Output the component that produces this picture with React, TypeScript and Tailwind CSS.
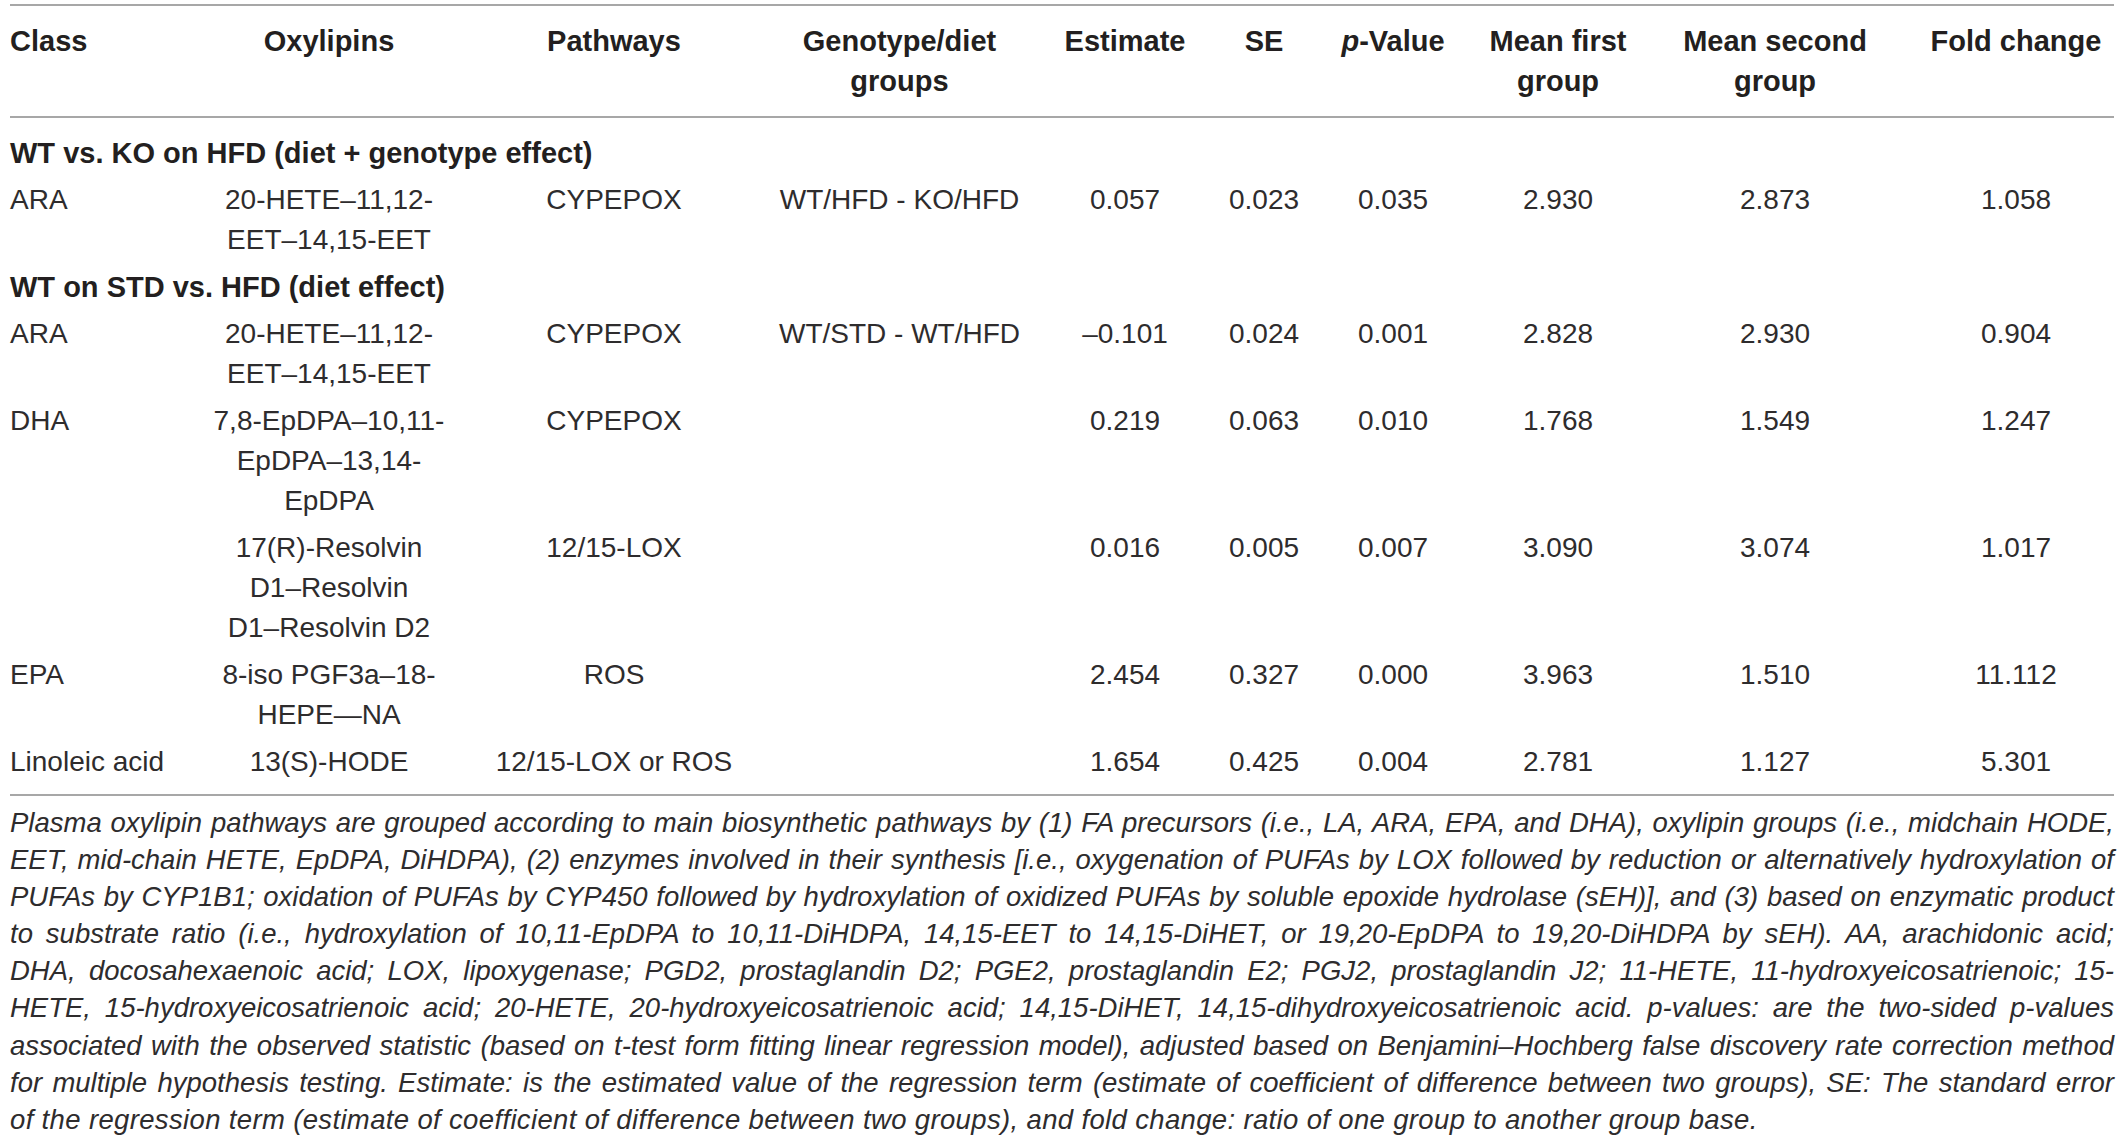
import React from "react";

type Row = {
  cls?: string;
  oxy: string[];
  path?: string;
  geno?: string;
  est: string;
  se: string;
  p: string;
  m1: string;
  m2: string;
  fc: string;
};

type Section = { title: string; rows: Row[] };

const sections: Section[] = [
  {
    title: "WT vs. KO on HFD (diet + genotype effect)",
    rows: [
      {
        cls: "ARA",
        oxy: ["20-HETE–11,12-", "EET–14,15-EET"],
        path: "CYPEPOX",
        geno: "WT/HFD - KO/HFD",
        est: "0.057",
        se: "0.023",
        p: "0.035",
        m1: "2.930",
        m2: "2.873",
        fc: "1.058",
      },
    ],
  },
  {
    title: "WT on STD vs. HFD (diet effect)",
    rows: [
      {
        cls: "ARA",
        oxy: ["20-HETE–11,12-", "EET–14,15-EET"],
        path: "CYPEPOX",
        geno: "WT/STD - WT/HFD",
        est: "–0.101",
        se: "0.024",
        p: "0.001",
        m1: "2.828",
        m2: "2.930",
        fc: "0.904",
      },
      {
        cls: "DHA",
        oxy: ["7,8-EpDPA–10,11-", "EpDPA–13,14-", "EpDPA"],
        path: "CYPEPOX",
        est: "0.219",
        se: "0.063",
        p: "0.010",
        m1: "1.768",
        m2: "1.549",
        fc: "1.247",
      },
      {
        oxy: ["17(R)-Resolvin", "D1–Resolvin", "D1–Resolvin D2"],
        path: "12/15-LOX",
        est: "0.016",
        se: "0.005",
        p: "0.007",
        m1: "3.090",
        m2: "3.074",
        fc: "1.017",
      },
      {
        cls: "EPA",
        oxy: ["8-iso PGF3a–18-", "HEPE—NA"],
        path: "ROS",
        est: "2.454",
        se: "0.327",
        p: "0.000",
        m1: "3.963",
        m2: "1.510",
        fc: "11.112",
      },
      {
        cls: "Linoleic acid",
        oxy: ["13(S)-HODE"],
        path: "12/15-LOX or ROS",
        est: "1.654",
        se: "0.425",
        p: "0.004",
        m1: "2.781",
        m2: "1.127",
        fc: "5.301",
      },
    ],
  },
];

const caption = [
  "Plasma oxylipin pathways are grouped according to main biosynthetic pathways by (1) FA precursors (i.e., LA, ARA, EPA, and DHA), oxylipin groups (i.e., midchain HODE,",
  "EET, mid-chain HETE, EpDPA, DiHDPA), (2) enzymes involved in their synthesis [i.e., oxygenation of PUFAs by LOX followed by reduction or alternatively hydroxylation of",
  "PUFAs by CYP1B1; oxidation of PUFAs by CYP450 followed by hydroxylation of oxidized PUFAs by soluble epoxide hydrolase (sEH)], and (3) based on enzymatic product",
  "to substrate ratio (i.e., hydroxylation of 10,11-EpDPA to 10,11-DiHDPA, 14,15-EET to 14,15-DiHET, or 19,20-EpDPA to 19,20-DiHDPA by sEH). AA, arachidonic acid;",
  "DHA, docosahexaenoic acid; LOX, lipoxygenase; PGD2, prostaglandin D2; PGE2, prostaglandin E2; PGJ2, prostaglandin J2; 11-HETE, 11-hydroxyeicosatrienoic; 15-",
  "HETE, 15-hydroxyeicosatrienoic acid; 20-HETE, 20-hydroxyeicosatrienoic acid; 14,15-DiHET, 14,15-dihydroxyeicosatrienoic acid. p-values: are the two-sided p-values",
  "associated with the observed statistic (based on t-test form fitting linear regression model), adjusted based on Benjamini–Hochberg false discovery rate correction method",
  "for multiple hypothesis testing. Estimate: is the estimated value of the regression term (estimate of coefficient of difference between two groups), SE: The standard error",
  "of the regression term (estimate of coefficient of difference between two groups), and fold change: ratio of one group to another group base.",
];

function Lines({ lines }: { lines: string[] }) {
  return (
    <>
      {lines.map((l, i) => (
        <span key={i} className="block whitespace-nowrap">
          {l}
        </span>
      ))}
    </>
  );
}

export default function App() {
  const th = "align-top px-0 pt-[15px] pb-[15px] font-bold text-[29px] text-[#231f20] text-center border-b-2 border-[#a7a7a7]";
  const td = "align-top px-0 py-[3.5px] text-center whitespace-nowrap";

  return (
    <div className="min-h-screen bg-white pt-[4px] pl-[10px] font-['Liberation_Sans',Arial,sans-serif] text-[#2e2c2d]">
      <div className="w-[2104px] border-y-2 border-[#a7a7a7]">
        <table className="w-full table-fixed border-separate border-spacing-0 text-[28px] leading-[40px]">
          <colgroup>
            <col className="w-[190px]" />
            <col className="w-[258px]" />
            <col className="w-[312px]" />
            <col className="w-[259px]" />
            <col className="w-[192px]" />
            <col className="w-[86px]" />
            <col className="w-[172px]" />
            <col className="w-[158px]" />
            <col className="w-[276px]" />
            <col className="w-[201px]" />
          </colgroup>
          <thead>
            <tr>
              <th className={`${th} !text-left`}>Class</th>
              <th className={th}>Oxylipins</th>
              <th className={th}>Pathways</th>
              <th className={th}>
                Genotype/diet
                <br />
                groups
              </th>
              <th className={th}>Estimate</th>
              <th className={th}>SE</th>
              <th className={th}>
                <i>p</i>-Value
              </th>
              <th className={th}>
                Mean first
                <br />
                group
              </th>
              <th className={`${th} whitespace-nowrap`}>
                Mean second
                <br />
                group
              </th>
              <th className={`${th} pl-[5px] whitespace-nowrap`}>Fold change</th>
            </tr>
          </thead>
          <tbody>
            {sections.map((s, si) => (
              <React.Fragment key={s.title}>
                <tr>
                  <td
                    colSpan={10}
                    className={`px-0 pb-[3.5px] text-left text-[29px] font-bold text-[#231f20] whitespace-nowrap ${si === 0 ? "pt-[15px]" : "pt-[3.5px]"}`}
                  >
                    {s.title}
                  </td>
                </tr>
                {s.rows.map((r, ri) => {
                  const last = si === sections.length - 1 && ri === s.rows.length - 1;
                  const pad = last ? "pb-[12px]" : "";
                  return (
                    <tr key={ri}>
                      <td className={`${td} text-left ${pad}`}>{r.cls}</td>
                      <td className={`${td} ${pad}`}>
                        <Lines lines={r.oxy} />
                      </td>
                      <td className={`${td} ${pad}`}>{r.path}</td>
                      <td className={`${td} ${pad}`}>{r.geno}</td>
                      <td className={`${td} ${pad}`}>{r.est}</td>
                      <td className={`${td} ${pad}`}>{r.se}</td>
                      <td className={`${td} ${pad}`}>{r.p}</td>
                      <td className={`${td} ${pad}`}>{r.m1}</td>
                      <td className={`${td} ${pad}`}>{r.m2}</td>
                      <td className={`${td} pl-[5px] ${pad}`}>{r.fc}</td>
                    </tr>
                  );
                })}
              </React.Fragment>
            ))}
          </tbody>
        </table>
      </div>

      <div className="mt-[8px] w-[2104px] text-[27.5px] leading-[37.1px] italic">
        {caption.map((line, i) => (
          <p
            key={i}
            className={
              i < caption.length - 1
                ? "whitespace-nowrap text-justify [text-align-last:justify]"
                : "whitespace-nowrap text-left tracking-[0.35px]"
            }
          >
            {line}
          </p>
        ))}
      </div>
    </div>
  );
}
